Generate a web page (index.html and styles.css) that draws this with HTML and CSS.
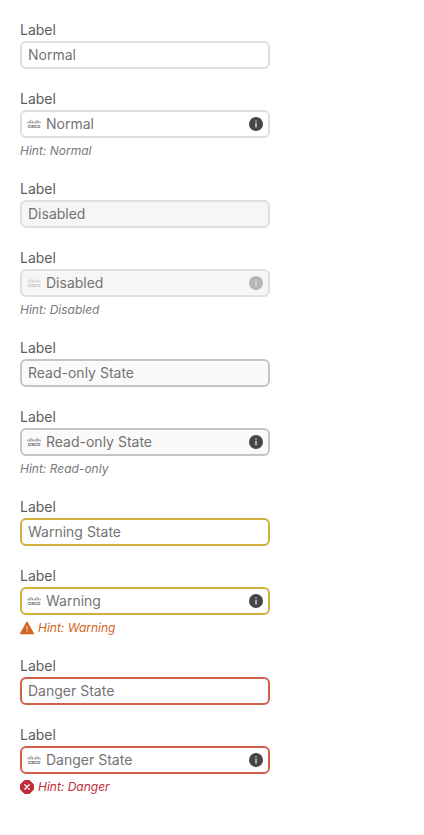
FILE: index.html
```html
<!DOCTYPE html>
<html lang="en">
<head>
<meta charset="utf-8">
<meta name="viewport" content="width=device-width, initial-scale=1">
<title>Text inputs</title>
<link rel="stylesheet" href="styles.css">
</head>
<body>
<svg class="sprite" aria-hidden="true">
  <symbol id="brand" viewBox="0 0 14 10">
    <path d="M.8 3.200v.8M2.300 2.500v1.500M3.900 1.200v2.800M5.400 2.500v1.500M7 3.200v.8M8.600 2.500v1.500M10.100 1.200v2.800M11.700 2.500v1.500M13.200 3.200v.8" fill="none" stroke="currentColor" stroke-width=".6" stroke-linecap="round"/>
    <text class="brand-name" x="7" y="9" text-anchor="middle">CISCO</text>
  </symbol>
  <symbol id="info" viewBox="0 0 14 14">
    <circle cx="7" cy="7" r="7" fill="currentColor"/>
    <path d="M6.300 3.400h1.400v1.400H6.300zM6.300 5.800h1.400v4.700H6.300z" fill="#d8d8d8"/>
  </symbol>
  <symbol id="warning" viewBox="0 0 14 14">
    <path d="M6.400.9a.7.7 0 0 1 1.200 0l6.300 11.400a.6.6 0 0 1-.5.9H.6a.6.6 0 0 1-.5-.9z" fill="currentColor"/>
    <path d="M6.400 5h1.200v4.200H6.400zM6.400 10.100h1.200v1.200H6.400z" fill="#f0c8a8"/>
  </symbol>
  <symbol id="danger" viewBox="0 0 14 14">
    <path d="M4.600 .5h4.800l4.100 4.100v4.800l-4.100 4.100H4.600L.5 9.400V4.600z" fill="currentColor" stroke="currentColor" stroke-linejoin="round"/>
    <path d="M4.800 4.800l4.400 4.400M9.200 4.800l-4.400 4.400" fill="none" stroke="#fff" stroke-width="1.300" stroke-linecap="round"/>
  </symbol>
</svg>
<form class="form">
  <div class="field">
    <label class="label" for="normal">Label</label>
    <div class="control"><input class="input" id="normal" type="text" value="Normal"></div>
  </div>
  <div class="field">
    <label class="label" for="normal-icons">Label</label>
    <div class="control"><svg class="brand"><use href="#brand"/></svg><input class="input" id="normal-icons" type="text" value="Normal" aria-describedby="hint-normal"><svg class="icon"><use href="#info"/></svg></div>
    <p class="hint" id="hint-normal">Hint: Normal</p>
  </div>
  <div class="field disabled">
    <label class="label" for="disabled">Label</label>
    <div class="control"><input class="input" id="disabled" type="text" value="Disabled" disabled></div>
  </div>
  <div class="field disabled">
    <label class="label" for="disabled-icons">Label</label>
    <div class="control"><svg class="brand"><use href="#brand"/></svg><input class="input" id="disabled-icons" type="text" value="Disabled" aria-describedby="hint-disabled" disabled><svg class="icon"><use href="#info"/></svg></div>
    <p class="hint" id="hint-disabled">Hint: Disabled</p>
  </div>
  <div class="field readonly">
    <label class="label" for="readonly">Label</label>
    <div class="control"><input class="input" id="readonly" type="text" value="Read-only State" readonly></div>
  </div>
  <div class="field readonly">
    <label class="label" for="readonly-icons">Label</label>
    <div class="control"><svg class="brand"><use href="#brand"/></svg><input class="input" id="readonly-icons" type="text" value="Read-only State" aria-describedby="hint-readonly" readonly><svg class="icon"><use href="#info"/></svg></div>
    <p class="hint" id="hint-readonly">Hint: Read-only</p>
  </div>
  <div class="field warning">
    <label class="label" for="warning-field">Label</label>
    <div class="control"><input class="input" id="warning-field" type="text" value="Warning State"></div>
  </div>
  <div class="field warning">
    <label class="label" for="warning-icons">Label</label>
    <div class="control"><svg class="brand"><use href="#brand"/></svg><input class="input" id="warning-icons" type="text" value="Warning" aria-describedby="hint-warning"><svg class="icon"><use href="#info"/></svg></div>
    <p class="hint" id="hint-warning"><svg class="hint-icon"><use href="#warning"/></svg>Hint: Warning</p>
  </div>
  <div class="field danger">
    <label class="label" for="danger-field">Label</label>
    <div class="control"><input class="input" id="danger-field" type="text" value="Danger State"></div>
  </div>
  <div class="field danger">
    <label class="label" for="danger-icons">Label</label>
    <div class="control"><svg class="brand"><use href="#brand"/></svg><input class="input" id="danger-icons" type="text" value="Danger State" aria-describedby="hint-danger"><svg class="icon"><use href="#info"/></svg></div>
    <p class="hint" id="hint-danger"><svg class="hint-icon"><use href="#danger"/></svg>Hint: Danger</p>
  </div>
</form>
</body>
</html>
```
FILE: styles.css
```css
* {
  box-sizing: border-box;
}

body {
  margin: 0;
  background: #fff;
  color: #5c5d60;
  font-family: Inter, "Liberation Sans", sans-serif;
  font-size: 14px;
  line-height: 20px;
}

.sprite {
  display: none;
}

.form {
  display: flex;
  flex-direction: column;
  gap: 20px;
  padding: 20px;
}

.field {
  width: 100%;
  max-width: 250px;
}

.label {
  display: block;
  margin-bottom: 1px;
}

.control {
  display: flex;
  align-items: center;
  gap: 5px;
  height: 28px;
  padding: 0 6px;
  border: 2px solid #dfdfdf;
  border-radius: 6px;
  background: #fff;
}

.input {
  flex: 1;
  min-width: 0;
  padding: 0;
  border: 0;
  outline: 0;
  background: transparent;
  color: #737373;
  font: inherit;
}

.brand {
  flex: none;
  width: 14px;
  height: 10px;
  margin-left: -1px;
  color: #464646;
}

.brand-name {
  fill: currentColor;
  font-size: 4px;
  font-weight: 600;
}

.icon {
  flex: none;
  width: 14px;
  height: 14px;
  margin-right: -1px;
  color: #464646;
}

.hint {
  display: flex;
  align-items: center;
  gap: 4px;
  margin: 5px 0 0;
  color: #78797e;
  font-size: 12px;
  font-style: italic;
  line-height: 16px;
}

.hint-icon {
  flex: none;
  width: 14px;
  height: 14px;
}

.disabled .control {
  background: #f6f6f6;
}

.disabled .brand,
.disabled .icon {
  color: #b5b5b5;
}

.readonly .control {
  border-color: #c5c5c9;
  background: #fafafa;
}

.warning .control {
  border-color: #d1b03c;
}

.warning .hint {
  color: #cf6624;
}

.danger .control {
  border-color: #d1614a;
}

.danger .hint {
  color: #c02d38;
}
```
